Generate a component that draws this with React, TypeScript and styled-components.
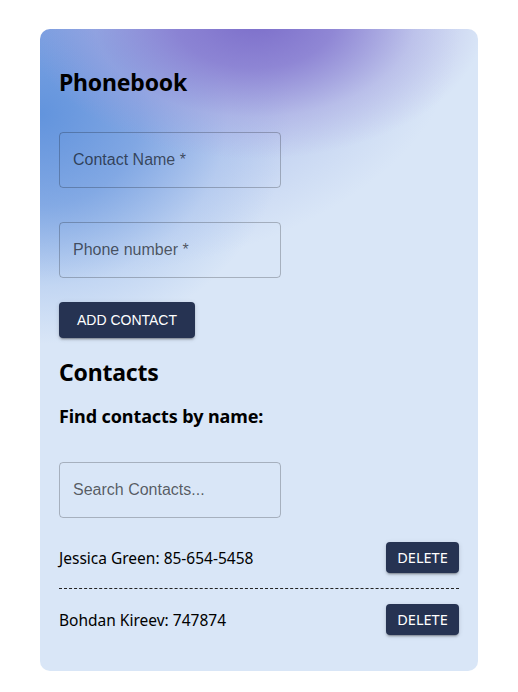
import React from "react";
import styled, { createGlobalStyle } from "styled-components";

const Global = createGlobalStyle`
  html, body { margin: 0; padding: 0; background: #ffffff; }
  body { font-family: "Noto Sans", "Open Sans", sans-serif; color: #000; }
  * { box-sizing: border-box; }
`;

const Card = styled.main`
  width: 438px;
  margin: 29px auto 0;
  padding: 37px 19px 21px;
  border-radius: 10px;
  background:
    radial-gradient(ellipse 230px 140px at 215px -10px, rgba(124, 110, 202, 1) 0%, rgba(135, 122, 208, 0.85) 35%, rgba(165, 160, 222, 0.45) 70%, rgba(217, 230, 247, 0) 100%),
    radial-gradient(ellipse 250px 230px at 0px 85px, rgba(98, 148, 221, 1) 0%, rgba(110, 156, 224, 0.75) 40%, rgba(160, 190, 236, 0.4) 75%, rgba(217, 230, 247, 0) 100%),
    radial-gradient(ellipse 420px 250px at 0px 0px, rgba(140, 150, 220, 0.7) 0%, rgba(150, 170, 228, 0.45) 60%, rgba(217, 230, 247, 0) 100%),
    #d9e6f7;
  display: flex;
  flex-direction: column;
  align-items: flex-start;
`;

const Title = styled.h2<{ $mt?: number }>`
  margin: ${(p) => p.$mt ?? 0}px 0 0;
  font-size: 23px;
  letter-spacing: -0.2px;
  line-height: 32px;
  font-weight: 700;
`;

const SubTitle = styled.h3`
  margin: 16px 0 0;
  font-size: 18px;
  letter-spacing: -0.1px;
  line-height: 25px;
  font-weight: 700;
`;

const Field = styled.input<{ $mt: number }>`
  margin-top: ${(p) => p.$mt}px;
  width: 222px;
  height: 56px;
  padding: 0 13px;
  border: 1px solid rgba(0, 0, 0, 0.23);
  border-radius: 4px;
  background: transparent;
  font-family: "Liberation Sans", Arial, sans-serif;
  font-size: 16px;
  color: #000;
  outline: none;
  &::placeholder {
    color: rgba(0, 0, 0, 0.62);
    opacity: 1;
  }
`;

const Button = styled.button<{ $small?: boolean }>`
  border: none;
  border-radius: 4px;
  background: #263352;
  color: #fff;
  text-transform: uppercase;
  cursor: pointer;
  box-shadow: 0 3px 1px -2px rgba(0, 0, 0, 0.2), 0 2px 2px 0 rgba(0, 0, 0, 0.14), 0 1px 5px 0 rgba(0, 0, 0, 0.12);
  font-family: ${(p) => (p.$small ? `"Noto Sans", sans-serif` : `"Liberation Sans", Arial, sans-serif`)};
  font-size: ${(p) => (p.$small ? 14.5 : 14)}px;
  height: ${(p) => (p.$small ? 31 : 36)}px;
  padding: ${(p) => (p.$small ? "0 0 2px" : "0 17px")};
  white-space: nowrap;
`;

const AddButton = styled(Button)`
  margin-top: 24px;
  width: 136px;
`;

const List = styled.ul`
  list-style: none;
  margin: 9px 0 0;
  padding: 0;
  width: 100%;
`;

const Item = styled.li`
  display: flex;
  align-items: center;
  justify-content: space-between;
  padding: 15px 0;
  font-size: 15.5px;
  &:not(:last-child) {
    border-bottom: 1px dashed #222;
  }
`;

const DeleteButton = styled(Button)`
  width: 73px;
`;

const contacts = [
  { id: 1, name: "Jessica Green", number: "85-654-5458" },
  { id: 2, name: "Bohdan Kireev", number: "747874" },
];

export default function App() {
  return (
    <>
      <Global />
      <Card>
        <Title>Phonebook</Title>
        <Field $mt={34} placeholder="Contact Name *" />
        <Field $mt={34} placeholder="Phone number *" />
        <AddButton>Add contact</AddButton>
        <Title $mt={18}>Contacts</Title>
        <SubTitle>Find contacts by name:</SubTitle>
        <Field $mt={33} placeholder="Search Contacts..." />
        <List>
          {contacts.map((c) => (
            <Item key={c.id}>
              <span>
                {c.name}: {c.number}
              </span>
              <DeleteButton $small>Delete</DeleteButton>
            </Item>
          ))}
        </List>
      </Card>
    </>
  );
}
